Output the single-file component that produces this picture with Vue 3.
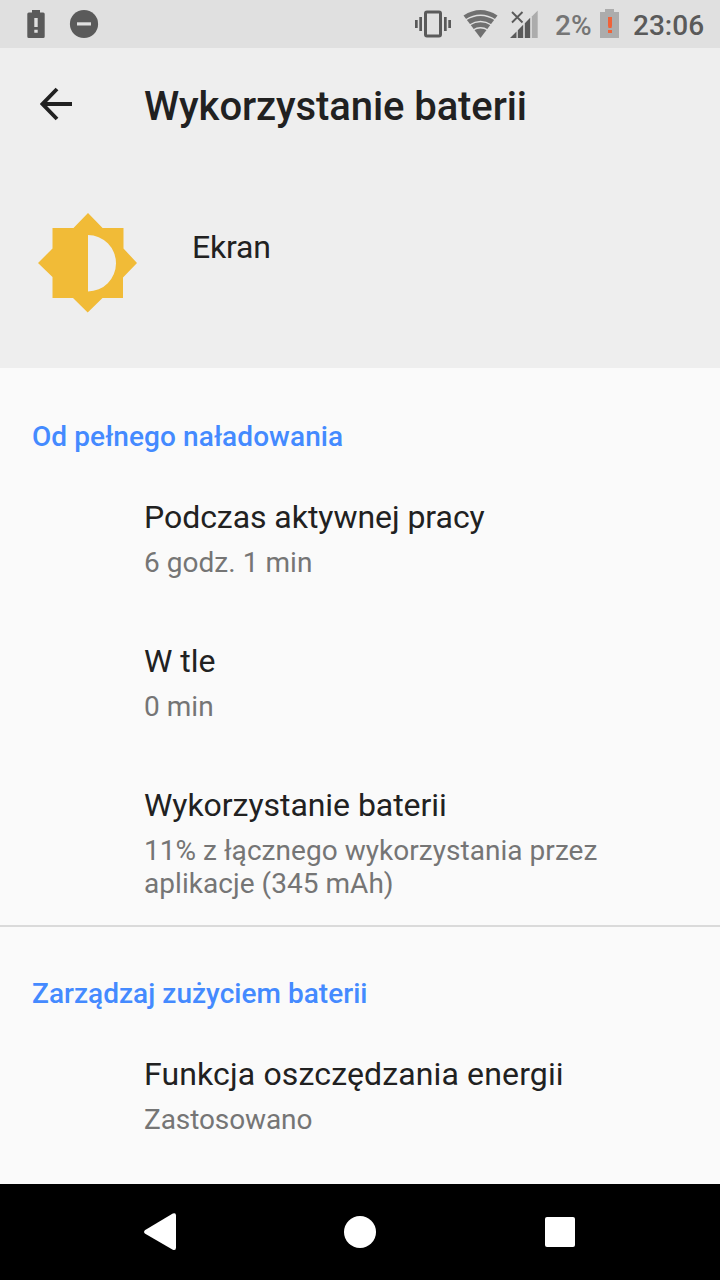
<script setup>
const groups = [
  {
    title: 'Od pełnego naładowania',
    items: [
      { title: 'Podczas aktywnej pracy', summary: '6 godz. 1 min' },
      { title: 'W tle', summary: '0 min' },
      {
        title: 'Wykorzystanie baterii',
        summary: '11% z łącznego wykorzystania przez aplikacje (345 mAh)',
      },
    ],
  },
  {
    title: 'Zarządzaj zużyciem baterii',
    items: [{ title: 'Funkcja oszczędzania energii', summary: 'Zastosowano' }],
  },
]
</script>

<template>
  <div class="screen">
    <div class="status">
      <svg class="left" width="120" height="48" viewBox="0 0 120 48">
        <path fill="#5a5a5a" fill-rule="evenodd" d="M32 10h8v2.500h3.200q1.500 0 1.500 1.500v22.400q0 1.500-1.500 1.500H28.800q-1.500 0-1.500-1.500V14q0-1.500 1.500-1.500H32zM34.300 18v9h3.400v-9zM34.300 29.700v3h3.400v-3z" />
        <circle cx="84" cy="24" r="14.100" fill="#5a5a5a" />
        <path fill="#e0e0e0" d="M77 22.300h14v3.200H77z" />
      </svg>
      <svg class="signals" width="140" height="48" viewBox="410 0 140 48">
        <rect x="425.500" y="12" width="15" height="24" rx="1.500" fill="none" stroke="#5a5a5a" stroke-width="3" />
        <path fill="#5a5a5a" d="M415 20h2.700v8H415zM419.300 17h2.700v14h-2.700zM444 17h2.700v14H444zM448.300 20h2.700v8h-2.700z" />
        <path fill="#707070" d="M480.500 38 463.500 15.500Q480.500 4.500 497.500 15.500z" />
        <g fill="none" stroke="#e0e0e0" stroke-width="1.400">
          <path d="M465.500 20Q480.500 10.500 495.500 20" />
          <path d="M469.500 25Q480.500 18 491.500 25" />
          <path d="M473.200 30Q480.500 25.500 487.800 30" />
        </g>
        <path fill="#5a5a5a" d="M510 38 516.500 31.500V38zM517.800 38V30.200l5.400-5.400V38zM524.800 38V23.200l5.400-5.400V38z" />
        <path fill="#acacac" d="M531.800 38V16.500l5.900-5.900V38z" />
        <path d="m512 12 10.500 10.500m0-10.500L512 22.500" stroke="#5a5a5a" stroke-width="1.900" />
      </svg>
      <span class="percent">2%</span>
      <svg class="battery" width="20" height="48" viewBox="600 0 20 48">
        <path fill="#acacac" d="M605 9h9v3h5v26h-19V12h5z" />
        <path fill="#f06238" d="M608 17h4v8.500l-.5 2.500h-3l-.5-2.500zM608 30h4v3h-4z" />
      </svg>
      <span class="clock">23:06</span>
    </div>

    <header>
      <div class="toolbar">
        <svg width="32" height="34" viewBox="0 0 32 34">
          <path d="M32 17H3M17 2 2.500 17 17 32" fill="none" stroke="#212121" stroke-width="3.900" />
        </svg>
        <h1>Wykorzystanie baterii</h1>
      </div>
      <div class="entity">
        <svg width="100" height="100" viewBox="0 0 100 100">
          <path fill="#f1bb37" fill-rule="evenodd" d="M50 0 64.600 15H85.500V35.500L99 50 85 64.500V85H64.500L49.700 99.500 35 85H14.500V64L0 50 14.500 35.500V15H35.500zM50 22v56.500A28 28.250 0 0 0 50 22z" />
        </svg>
        <span>Ekran</span>
      </div>
    </header>

    <main>
      <section v-for="group in groups" :key="group.title">
        <h2>{{ group.title }}</h2>
        <div v-for="item in group.items" :key="item.title" class="item">
          <div class="name">{{ item.title }}</div>
          <div class="summary">{{ item.summary }}</div>
        </div>
      </section>
    </main>

    <nav>
      <svg width="720" height="96" viewBox="0 0 720 96">
        <g fill="#fff">
          <path d="M144.800 46.200 172.800 29.500Q176 28.200 176 31.500V63.500Q176 67 172.800 65.700L144.800 49.500Q143 48 144.800 46.200z" />
          <circle cx="360" cy="48" r="16" />
          <rect x="545" y="33" width="30" height="30" rx="2" />
        </g>
      </svg>
    </nav>
  </div>
</template>

<style>
body {
  margin: 0;
}
</style>

<style scoped>
.screen {
  width: 720px;
  height: 1280px;
  display: flex;
  flex-direction: column;
  overflow: hidden;
  background: #fafafa;
  color: #212121;
  font-family: Roboto, sans-serif;
}
svg {
  display: block;
  flex: none;
}
.status {
  height: 48px;
  flex: none;
  display: flex;
  background: #e0e0e0;
  font-size: 28px;
  font-weight: 500;
  line-height: 52px;
  white-space: nowrap;
}
.signals {
  margin-left: 290px;
}
.percent {
  width: 45px;
  margin-left: 5px;
  color: #757575;
}
.clock {
  margin-left: 13px;
  color: #5a5a5a;
}
header {
  height: 320px;
  flex: none;
  background: #eeeeee;
}
.toolbar {
  height: 112px;
  padding-left: 40px;
  display: flex;
  align-items: center;
}
h1 {
  margin: 6px 0 0 72px;
  font-size: 40px;
  font-weight: 500;
  line-height: 48px;
  letter-spacing: -0.09px;
}
.entity {
  padding: 53px 0 0 38px;
  display: flex;
}
.entity span {
  margin: 15px 0 0 54px;
  font-size: 32px;
  line-height: 38px;
  letter-spacing: -0.2px;
}
main {
  flex: 1;
  min-height: 0;
  overflow: hidden;
}
h2 {
  box-sizing: border-box;
  height: 98px;
  margin: 0;
  padding: 52px 32px 0;
  color: #448aff;
  font-size: 28px;
  font-weight: 500;
  line-height: 33px;
  letter-spacing: 0.08px;
}
section + section {
  border-top: 2px solid #dadada;
}
section + section h2 {
  height: 96px;
  padding-top: 50px;
  letter-spacing: 0.03px;
}
.item {
  box-sizing: border-box;
  min-height: 144px;
  padding: 32px 100px 25px 144px;
}
.name {
  font-size: 32px;
  line-height: 38px;
  letter-spacing: -0.05px;
}
.summary {
  margin-top: 10px;
  color: #757575;
  font-size: 28px;
  line-height: 33px;
  letter-spacing: 0.04px;
}
section + section .name {
  letter-spacing: 0.14px;
}
section + section .summary {
  letter-spacing: -0.1px;
}
nav {
  height: 96px;
  flex: none;
  background: #000;
}
</style>
